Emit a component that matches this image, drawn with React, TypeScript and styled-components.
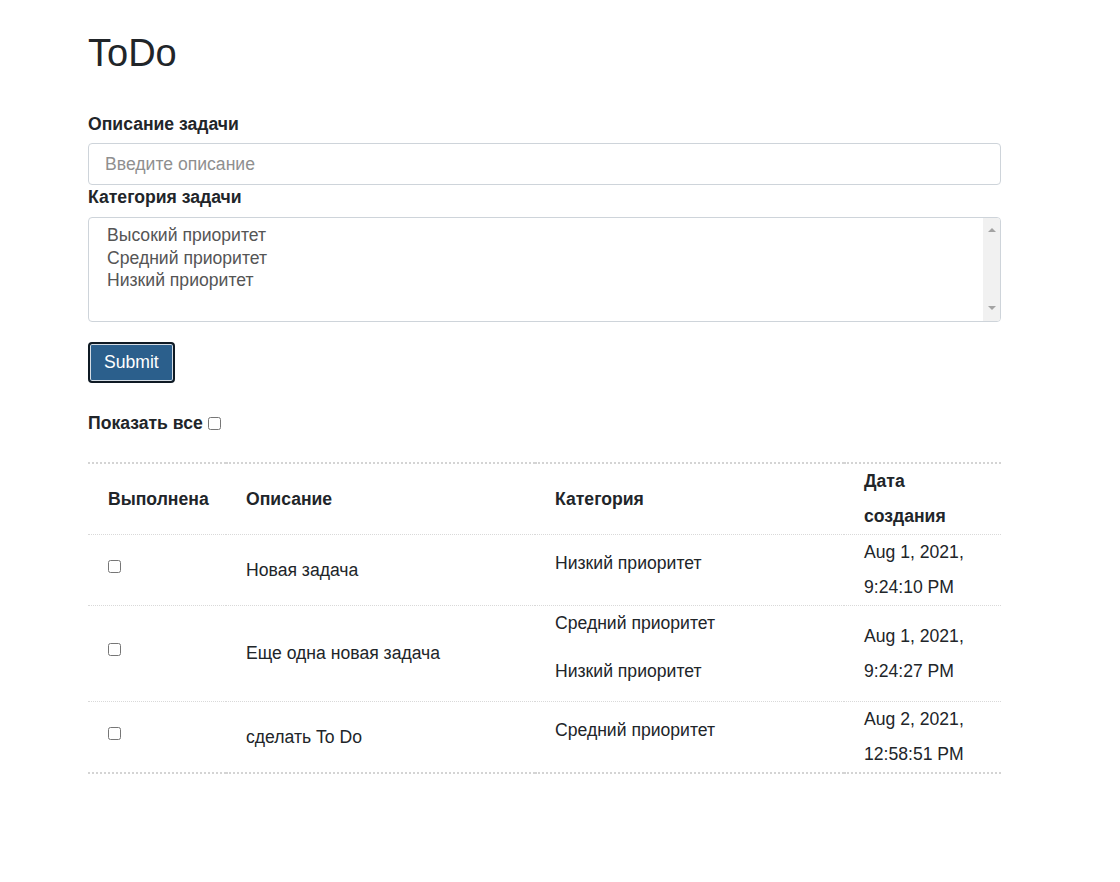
import React from "react";
import styled, { createGlobalStyle } from "styled-components";

const GlobalStyle = createGlobalStyle`
  body {
    margin: 0;
    background: #fff;
    font-family: "Liberation Sans", Arial, sans-serif;
    font-size: 17.6px;
    line-height: 1.5;
    color: #212529;
  }
`;

const Page = styled.div`
  width: 913px;
  padding: 29px 0 40px 88px;
`;

const Title = styled.h1`
  margin: 0;
  font-size: 38px;
  font-weight: 400;
  line-height: 48px;
  color: #212529;
`;

const Form = styled.form`
  margin-top: 35px;
  display: flex;
  flex-direction: column;
  align-items: flex-start;
`;

const Label = styled.label<{ gap?: number }>`
  display: block;
  font-weight: 700;
  line-height: 24px;
  margin-bottom: ${({ gap }) => gap ?? 8}px;
`;

const TextInput = styled.input`
  box-sizing: border-box;
  width: 100%;
  height: 42px;
  padding: 0 16px;
  border: 1px solid #ced4da;
  border-radius: 4px;
  font-family: inherit;
  font-size: 17.6px;
  color: #495057;
  outline: none;

  &::placeholder {
    color: #8f8f8f;
  }
`;

const ListBox = styled.div`
  box-sizing: border-box;
  width: 100%;
  height: 105px;
  display: flex;
  border: 1px solid #ced4da;
  border-radius: 4px;
  overflow: hidden;
`;

const Options = styled.div`
  flex: 1;
  padding: 6px 0 0 18px;
  color: #555;
`;

const Option = styled.div`
  line-height: 22.5px;
`;

const ScrollBar = styled.div`
  width: 17px;
  background: #f1f1f1;
  display: flex;
  flex-direction: column;
  justify-content: space-between;
  align-items: center;
  padding: 10px 0 11px;
`;

const Arrow = styled.span<{ down?: boolean }>`
  width: 0;
  height: 0;
  border-left: 4px solid transparent;
  border-right: 4px solid transparent;
  ${({ down }) =>
    down ? "border-top: 4px solid #a3a3a3;" : "border-bottom: 4px solid #a3a3a3;"}
`;

const SubmitButton = styled.button`
  margin-top: 20px;
  height: 41px;
  padding: 0 14px;
  background: #2b5f8c;
  color: #fff;
  font-family: inherit;
  font-size: 17.6px;
  border: 2px solid #0f1a24;
  border-radius: 4px;
  box-shadow: inset 0 0 0 1px #d5dde5;
  cursor: pointer;
`;

const ShowAll = styled.label`
  margin-top: 28px;
  font-weight: 700;
  line-height: 24px;
  display: flex;
  align-items: center;
  gap: 5px;
`;

const Check = styled.input.attrs({ type: "checkbox" })`
  width: 13px;
  height: 13px;
  margin: 0;
`;

const Table = styled.table`
  margin-top: 27px;
  width: 913px;
  table-layout: fixed;
  border-collapse: collapse;
  border-top: 2px dotted #d4d4d4;
  border-bottom: 2px dotted #d4d4d4;
`;

const Th = styled.th`
  text-align: left;
  vertical-align: middle;
  padding: 0 20px;
  line-height: 35px;
  font-weight: 700;
`;

const Td = styled.td`
  vertical-align: middle;
  padding: 0 20px;
  line-height: 35px;
  border-top: 1px dotted #d9d9d9;
`;

const Category = styled.div`
  line-height: 35px;
  margin-bottom: 12.5px;
`;

const RowCheck = styled(Check)`
  vertical-align: 3px;
`;

const todos = [
  {
    text: "Новая задача",
    categories: ["Низкий приоритет"],
    date: "Aug 1, 2021, 9:24:10 PM",
  },
  {
    text: "Еще одна новая задача",
    categories: ["Средний приоритет", "Низкий приоритет"],
    date: "Aug 1, 2021, 9:24:27 PM",
  },
  {
    text: "сделать To Do",
    categories: ["Средний приоритет"],
    date: "Aug 2, 2021, 12:58:51 PM",
  },
];

const App = () => {
  return (
    <Page>
      <GlobalStyle />
      <Title>ToDo</Title>
      <Form onSubmit={(e) => e.preventDefault()}>
        <Label gap={7}>Описание задачи</Label>
        <TextInput placeholder="Введите описание" />
        <Label>Категория задачи</Label>
        <ListBox>
          <Options>
            <Option>Высокий приоритет</Option>
            <Option>Средний приоритет</Option>
            <Option>Низкий приоритет</Option>
          </Options>
          <ScrollBar>
            <Arrow />
            <Arrow down />
          </ScrollBar>
        </ListBox>
        <SubmitButton type="submit">Submit</SubmitButton>
        <ShowAll>
          Показать все <Check />
        </ShowAll>
      </Form>
      <Table>
        <colgroup>
          <col style={{ width: 138 }} />
          <col style={{ width: 309 }} />
          <col style={{ width: 309 }} />
          <col style={{ width: 157 }} />
        </colgroup>
        <thead>
          <tr>
            <Th>Выполнена</Th>
            <Th>Описание</Th>
            <Th>Категория</Th>
            <Th>Дата создания</Th>
          </tr>
        </thead>
        <tbody>
          {todos.map((t) => (
            <tr key={t.text}>
              <Td>
                <RowCheck />
              </Td>
              <Td>{t.text}</Td>
              <Td>
                {t.categories.map((c) => (
                  <Category key={c}>{c}</Category>
                ))}
              </Td>
              <Td>{t.date}</Td>
            </tr>
          ))}
        </tbody>
      </Table>
    </Page>
  );
};

export default App;
